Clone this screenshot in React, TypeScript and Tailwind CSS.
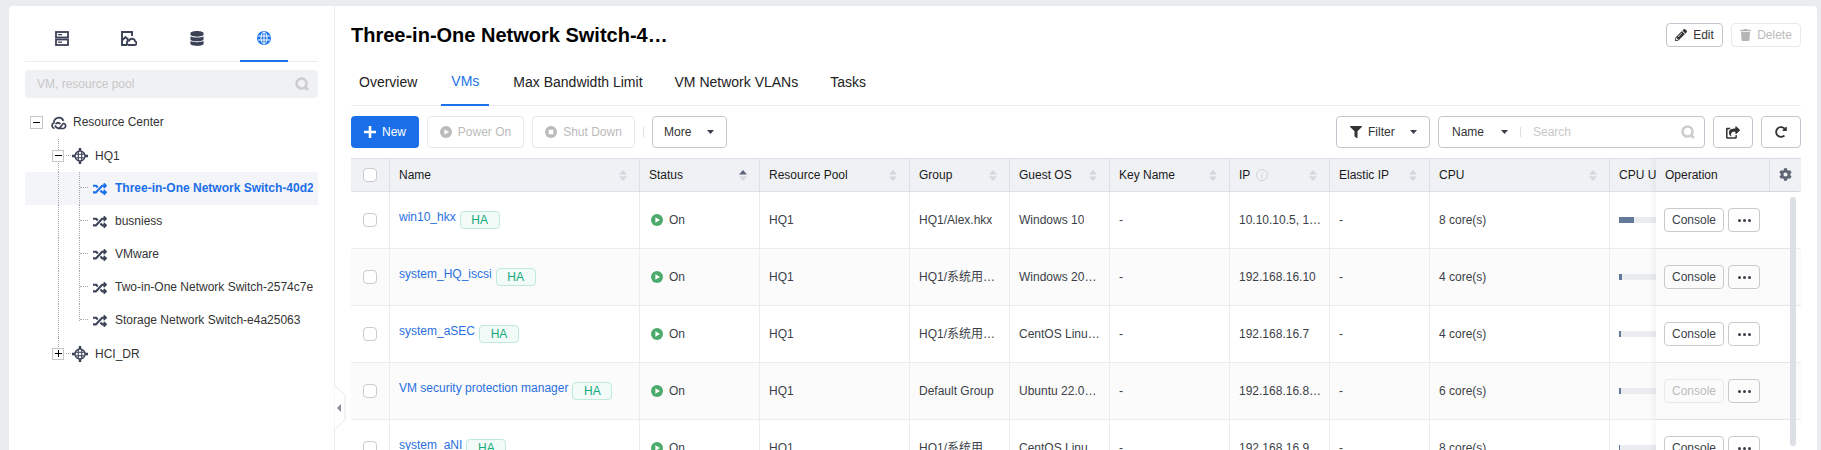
import { FaDatabase, FaCog, FaFilter, FaPencilAlt, FaRandom, FaRedoAlt, FaShareSquare, FaTrash } from 'react-icons/fa';

const dark = '#3b4256';

function SearchIcon({ className }: { className?: string }) {
  return (
    <svg viewBox="0 0 14 14" className={className} fill="none" stroke="#cdcdcd" strokeWidth="2.6">
      <circle cx="6.500" cy="6.500" r="5" />
      <path d="M10 10l3 3" />
    </svg>
  );
}

function Caret() {
  return (
    <svg viewBox="0 0 7 4" className="w-[7px] h-[4px]" fill="#3b3f4a">
      <path d="M0 0h7L3.5 4z" />
    </svg>
  );
}

function CircleGlyph({ stop, color }: { stop?: boolean; color: string }) {
  return (
    <svg viewBox="0 0 12 12" className="w-[12px] h-[12px] shrink-0">
      <circle cx="6" cy="6" r="6" fill={color} />
      {stop ? <rect x="3.700" y="3.700" width="4.600" height="4.600" fill="#fff" /> : <path d="M4.400 3.200v5.600L9 6z" fill="#fff" />}
    </svg>
  );
}

function ServerIcon() {
  return (
    <svg viewBox="0 0 14 15" className="w-[14px] h-[15px]" fill="none" stroke={dark} strokeWidth="1.800">
      <rect x="1" y="1" width="12" height="5.500" />
      <rect x="1" y="8.500" width="12" height="5.500" />
      <path d="M3 3.700h4M3 11.200h4" strokeWidth="1.300" />
    </svg>
  );
}

function ImageCloudIcon() {
  return (
    <svg viewBox="0 0 16 15" className="w-[16px] h-[15px]" fill="none" stroke={dark} strokeWidth="1.900">
      <path d="M6 14H1V1h10v4" />
      <path d="M1.500 9l3-3 3 3" />
      <path d="M7.500 14h6.300a1.900 1.900 0 0 0 .4-3.700 3.200 3.200 0 0 0-6-.8A2.300 2.300 0 0 0 7.500 14z" fill="#fff" />
    </svg>
  );
}

function GlobeIcon() {
  return (
    <svg viewBox="0 0 14 14" className="w-[14px] h-[14px]" fill="none">
      <circle cx="7" cy="7" r="7" fill="#1a73e8" />
      <ellipse cx="7" cy="7" rx="3" ry="6" stroke="#fff" strokeWidth="1" />
      <path d="M7 1v12M1 5h12M1 9h12" stroke="#fff" strokeWidth="1" />
    </svg>
  );
}

function CloudLoopIcon() {
  return (
    <svg viewBox="0 0 16 14" className="w-[16px] h-[14px]" fill="none" stroke={dark} strokeWidth="1.700">
      <path d="M3.500 12.500a3 3 0 0 1-.6-5.700A5 5 0 0 1 12.500 4.800" />
      <path d="M4 9.500c1.500 3 4 3.500 5.500 1.500S12 7 13 7.500a2.600 2.600 0 0 1-.5 5H7" />
      <path d="M4.500 8c2-2 3.500-1.500 5 0" />
    </svg>
  );
}

function NetworkIcon() {
  return (
    <svg viewBox="0 0 16 16" className="w-[16px] h-[16px]" fill="none" stroke={dark} strokeWidth="1.400">
      <circle cx="8" cy="8" r="5" />
      <path d="M3 6.300h10M3 9.700h10M6.300 3v10M9.700 3v10" strokeWidth="1.100" />
      <path d="M0 8h3M13 8h3M8 0v3M8 13v3" strokeWidth="2.400" />
    </svg>
  );
}

function TreeBox({ open, small }: { open?: boolean; small?: boolean }) {
  return (
    <span className={`relative z-10 flex items-center justify-center bg-white border border-[#c4c6cc] shrink-0 ${small ? 'w-[12px] h-[12px]' : 'w-[13px] h-[13px]'}`}>
      <span className="block w-[7px] h-px bg-black" />
      {!open && <span className="absolute block w-px h-[7px] bg-black" />}
    </span>
  );
}

const switches = ['Three-in-One Network Switch-40d2a1b87', 'busniess', 'VMware', 'Two-in-One Network Switch-2574c7e9', 'Storage Network Switch-e4a25063'];

function Tree() {
  return (
    <div className="mt-[8px] text-[12px] text-[#333]">
      <div className="flex items-center h-[33px] pl-[5px]">
        <TreeBox open />
        <span className="ml-[8px] mr-[6px]"><CloudLoopIcon /></span>
        <span className="mb-[2px]">Resource Center</span>
      </div>
      <div className="relative flex items-center h-[33px] pl-[27px]">
        <span className="absolute left-[33px] top-0 bottom-0 border-l border-dotted border-[#aaa]" />
        <TreeBox open small />
        <span className="w-[5px] ml-[2px] mr-[1px] border-b border-dotted border-[#aaa]" />
        <span className="mr-[7px]"><NetworkIcon /></span>
        <span>HQ1</span>
      </div>
      {switches.map((s, i) => {
        const last = i === switches.length - 1;
        return (
          <div key={s} className={`relative flex items-center h-[33px] pl-[54px] ${i === 0 ? 'bg-[#f4f5f9] text-[#1a6fe8] font-bold' : ''}`}>
            <span className="absolute left-[33px] top-0 bottom-0 border-l border-dotted border-[#aaa]" />
            <span className={`self-start w-[9px] border-l border-dotted border-[#aaa] ${last ? 'h-[17px]' : 'h-full'}`}>
              <span className="block h-[16px] border-b border-dotted border-[#aaa]" />
            </span>
            <FaRandom className="w-[16px] h-[14px] ml-[4px] mr-[7px] shrink-0" color={i === 0 ? '#1a6fe8' : dark} />
            <span className="mb-[2px] whitespace-nowrap overflow-hidden w-[198px]">{s}</span>
          </div>
        );
      })}
      <div className="relative flex items-center h-[33px] pl-[27px]">
        <span className="absolute left-[33px] top-0 h-[10px] border-l border-dotted border-[#aaa]" />
        <TreeBox small />
        <span className="w-[5px] ml-[2px] mr-[1px] border-b border-dotted border-[#aaa]" />
        <span className="mr-[7px]"><NetworkIcon /></span>
        <span>HCI_DR</span>
      </div>
    </div>
  );
}

function Sidebar() {
  return (
    <aside className="w-[326px] shrink-0 bg-white border-r border-[#ebecf0] rounded-tl-sm px-[16px]">
      <div className="mt-[18px] flex gap-[19.4px] pl-[13px] border-b border-[#ebecf0]">
        {[<ServerIcon />, <ImageCloudIcon />, <FaDatabase className="w-[14px] h-[15px]" color={dark} />, <GlobeIcon />].map((icon, i) => (
          <div key={i} className={`w-[48px] h-[38px] -mb-px pb-[9px] flex items-center justify-center ${i === 3 ? 'border-b-2 border-[#1a73e8]' : ''}`}>
            {icon}
          </div>
        ))}
      </div>
      <div className="mt-[8px] h-[28px] rounded-sm bg-[#f0f1f4] flex items-center justify-between pl-[12px] pr-[9px] text-[12px] text-[#c8c8c8]">
        <span>VM, resource pool</span>
        <SearchIcon className="w-[14px] h-[14px]" />
      </div>
      <Tree />
    </aside>
  );
}

function PageHead() {
  return (
    <div className="flex items-center justify-between h-[58px]">
      <h1 className="w-[320px] truncate text-[20px] font-bold text-black">Three-in-One Network Switch-40d2a1b87</h1>
      <div className="flex gap-[8px] text-[12px]">
        <button className="w-[57px] h-[24px] rounded-sm border border-[#c3c6ce] flex items-center justify-center gap-[6px] text-[#333]">
          <FaPencilAlt className="w-[12px] h-[12px]" color="#333" />
          Edit
        </button>
        <button className="w-[70px] h-[24px] rounded-sm border border-[#e8e9ec] flex items-center justify-center gap-[6px] text-[#bbb]">
          <FaTrash className="w-[11px] h-[12px]" color="#b5b5b5" />
          Delete
        </button>
      </div>
    </div>
  );
}

function Tabs() {
  const tabs = ['Overview', 'VMs', 'Max Bandwidth Limit', 'VM Network VLANs', 'Tasks'];
  return (
    <div className="flex gap-[16px] h-[42px] border-b border-[#ebecf0] text-[14px] text-[#222]">
      {tabs.map((t) => (
        <div key={t} className={`h-[42px] pb-[6px] flex items-center justify-center ${t === 'VMs' ? 'min-w-[48px] border-b-2 border-[#1a73e8] text-[#1a73e8]' : 'px-[8px]'}`}>
          {t}
        </div>
      ))}
    </div>
  );
}

function Toolbar() {
  return (
    <div className="mt-[10px] flex justify-between h-[32px] text-[12px]">
      <div className="flex items-center gap-[8px]">
        <button className="w-[68px] h-[32px] rounded-sm bg-[#1a6fe8] text-white flex items-center justify-center gap-[6px]">
          <svg viewBox="0 0 12 12" className="w-[12px] h-[12px]" fill="none" stroke="#fff" strokeWidth="2.600"><path d="M6 0v12M0 6h12" /></svg>
          New
        </button>
        <button className="w-[97px] h-[32px] rounded-sm border border-[#e8e9ec] text-[#bbb] flex items-center justify-center gap-[6px]">
          <CircleGlyph color="#bbb" />
          Power On
        </button>
        <button className="w-[103px] h-[32px] rounded-sm border border-[#e8e9ec] text-[#bbb] flex items-center justify-center gap-[6px]">
          <CircleGlyph stop color="#bbb" />
          Shut Down
        </button>
        <span className="w-px h-[10px] bg-[#dcdfe6]" />
        <button className="w-[75px] h-[32px] rounded-sm border border-[#c3c6ce] text-[#333] flex items-center justify-between pl-[11px] pr-[12px]">
          More
          <Caret />
        </button>
      </div>
      <div className="flex gap-[8px]">
        <button className="w-[94px] h-[32px] rounded-sm border border-[#c3c6ce] text-[#333] flex items-center pl-[13px] pr-[12px]">
          <FaFilter className="w-[12px] h-[12px] mr-[6px]" color="#333" />
          Filter
          <span className="ml-auto"><Caret /></span>
        </button>
        <div className="w-[267px] h-[32px] rounded-sm border border-[#c3c6ce] flex items-center pl-[13px] pr-[9px] text-[#333]">
          Name
          <span className="ml-[17px]"><Caret /></span>
          <span className="w-px h-[10px] ml-[12px] mr-[12px] bg-[#dcdfe6]" />
          <span className="text-[#c8c8c8]">Search</span>
          <SearchIcon className="ml-auto w-[14px] h-[14px]" />
        </div>
        <button className="w-[40px] h-[32px] rounded-sm border border-[#c3c6ce] flex items-center justify-center">
          <FaShareSquare className="w-[14px] h-[13px]" color="#333" />
        </button>
        <button className="w-[40px] h-[32px] rounded-sm border border-[#c3c6ce] flex items-center justify-center">
          <FaRedoAlt className="w-[12px] h-[12px]" color="#333" />
        </button>
      </div>
    </div>
  );
}

function SortArrows({ active }: { active?: boolean }) {
  return (
    <svg viewBox="0 0 8 11" className="w-[8px] h-[11px] shrink-0">
      <path d="M4 0l4 4.500H0z" fill={active ? '#5a6478' : '#d4d6dc'} />
      <path d="M0 6.500h8L4 11z" fill="#d4d6dc" />
    </svg>
  );
}

const columns = [
  { label: 'Name', w: 'w-[250px]' },
  { label: 'Status', w: 'w-[120px]' },
  { label: 'Resource Pool', w: 'w-[150px]' },
  { label: 'Group', w: 'w-[100px]' },
  { label: 'Guest OS', w: 'w-[100px]' },
  { label: 'Key Name', w: 'w-[120px]' },
  { label: 'IP', w: 'w-[100px]' },
  { label: 'Elastic IP', w: 'w-[100px]' },
  { label: 'CPU', w: 'w-[180px]' },
];

const rows = [
  { name: 'win10_hkx', group: 'HQ1/Alex.hkx', os: 'Windows 10', ip: '10.10.10.5, 10.10.10.6', cpu: '8 core(s)', used: 15 },
  { name: 'system_HQ_iscsi', group: 'HQ1/系统用户虚拟机', os: 'Windows 2012 R2', ip: '192.168.16.10', cpu: '4 core(s)', used: 3 },
  { name: 'system_aSEC', group: 'HQ1/系统用户虚拟机', os: 'CentOS Linux 7', ip: '192.168.16.7', cpu: '4 core(s)', used: 2 },
  { name: 'VM security protection manager', group: 'Default Group', os: 'Ubuntu 22.04 LTS', ip: '192.168.16.8, 10.0.0.1', cpu: '6 core(s)', used: 2, disabled: true },
  { name: 'system_aNI', group: 'HQ1/系统用户虚拟机', os: 'CentOS Linux 7', ip: '192.168.16.9', cpu: '8 core(s)', used: 1 },
];

function HeaderRow() {
  return (
    <div className="flex h-[34px] bg-[#f0f1f5] border-y border-[#dcdfe6] text-[12px] text-[#1a1a1a]">
      <div className="flex-1 min-w-0 overflow-hidden flex">
        <div className="w-[39px] shrink-0 flex items-center pl-[12px] border-r border-[#dcdfe6]">
          <span className="w-[14px] h-[14px] rounded-sm border border-[#c8cbd2] bg-white" />
        </div>
        {columns.map((c) => (
          <div key={c.label} className={`${c.w} shrink-0 flex items-center justify-between pl-[9px] pr-[12px] border-r border-[#dcdfe6]`}>
            <span className="flex items-center gap-[6px]">
              {c.label}
              {c.label === 'IP' && (
                <svg viewBox="0 0 12 12" className="w-[12px] h-[12px]" fill="none" stroke="#cfd1d6">
                  <circle cx="6" cy="6" r="5.500" />
                  <path d="M6 5v4M6 3v1" />
                </svg>
              )}
            </span>
            <SortArrows active={c.label === 'Status'} />
          </div>
        ))}
        <div className="w-[200px] shrink-0 flex items-center pl-[9px] whitespace-nowrap">CPU Usage</div>
      </div>
      <div className="relative w-[145px] shrink-0 flex bg-[#f0f1f5] shadow-[-4px_0_5px_rgba(0,0,0,0.04)]">
        <div className="flex-1 flex items-center pl-[9px] border-r border-[#dcdfe6]">Operation</div>
        <div className="w-[31px] flex items-center justify-center pb-[2px]">
          <FaCog className="w-[13px] h-[13px]" color="#5f6673" />
        </div>
      </div>
    </div>
  );
}

function Row({ row, even }: { row: (typeof rows)[number]; even: boolean }) {
  const bg = even ? 'bg-[#fbfbfb]' : 'bg-white';
  const cell = 'shrink-0 flex items-center border-r border-[#ebecf0] min-w-0';
  const pad = 'pl-[9px] pr-[8px]';
  return (
    <div className={`flex h-[57px] border-b border-[#ebecf0] text-[12px] text-[#3c3f48] ${bg}`}>
      <div className="flex-1 min-w-0 overflow-hidden flex">
        <div className="w-[39px] shrink-0 flex items-center pl-[12px] border-r border-[#ebecf0]">
          <span className="w-[14px] h-[14px] rounded-sm border border-[#c8cbd2] bg-white" />
        </div>
        <div className={`${cell} ${pad} w-[250px]`}>
          <span className="mb-[6px] text-[#2970e0] whitespace-nowrap">{row.name}</span>
          <span className="ml-[4px] w-[40px] h-[18px] flex items-center justify-center rounded-sm border border-[#bfe9da] bg-[#f2fbf8] text-[#12a97a]">HA</span>
        </div>
        <div className={`${cell} pl-[11px] w-[120px]`}>
          <CircleGlyph color="#4cab6c" />
          <span className="ml-[6px]">On</span>
        </div>
        <div className={`${cell} ${pad} w-[150px]`}>HQ1</div>
        <div className={`${cell} ${pad} w-[100px]`}><span className="truncate">{row.group}</span></div>
        <div className={`${cell} ${pad} w-[100px]`}><span className="truncate">{row.os}</span></div>
        <div className={`${cell} ${pad} w-[120px]`}>-</div>
        <div className={`${cell} pl-[9px] pr-[5px] w-[100px]`}><span className="truncate">{row.ip}</span></div>
        <div className={`${cell} ${pad} w-[100px]`}>-</div>
        <div className={`${cell} ${pad} w-[180px]`}>{row.cpu}</div>
        <div className="w-[200px] shrink-0 flex items-center pl-[9px]">
          <div className="w-[150px] h-[6px] bg-[#eaecf0]">
            <div className="h-full bg-[#64799a]" style={{ width: row.used }} />
          </div>
        </div>
      </div>
      <div className={`relative w-[145px] shrink-0 flex items-center gap-[4px] pl-[8px] shadow-[-4px_0_5px_rgba(0,0,0,0.04)] ${bg}`}>
        <button className={`w-[60px] h-[24px] rounded-sm border ${row.disabled ? 'border-[#e8e9ec] text-[#bbb]' : 'border-[#c8cad0] text-[#3c3f48]'}`}>Console</button>
        <button className="w-[32px] h-[24px] rounded-sm border border-[#c8cad0] flex items-center justify-center gap-[2px]">
          <span className="w-[3px] h-[3px] rounded-full bg-[#3c3f48]" />
          <span className="w-[3px] h-[3px] rounded-full bg-[#3c3f48]" />
          <span className="w-[3px] h-[3px] rounded-full bg-[#3c3f48]" />
        </button>
      </div>
    </div>
  );
}

function VmTable() {
  return (
    <div className="relative mt-[10px]">
      <HeaderRow />
      {rows.map((r, i) => <Row key={r.name} row={r} even={i % 2 === 1} />)}
      <div className="absolute right-[5px] top-[39px] w-[6px] h-[249px] rounded-full bg-[#dcdfe6] z-20" />
    </div>
  );
}

export default function App() {
  return (
    <div className="relative w-[1821px] h-[450px] overflow-hidden bg-[#ebecf0] pt-[6px] pl-[9px] pr-[4px] flex font-['Liberation_Sans','Noto_Sans_CJK_SC',sans-serif]">
      <Sidebar />
      <main className="flex-1 min-w-0 bg-white rounded-tr-sm px-[16px]">
        <PageHead />
        <Tabs />
        <Toolbar />
        <VmTable />
      </main>
      {/* collapse handle on the sidebar edge */}
      <svg viewBox="0 0 12 46" className="absolute left-[334px] top-[385px] w-[12px] h-[46px] z-10" fill="#fff" stroke="#e4e5ea">
        <path d="M0.500 0l10.500 10.500v24L0.500 45" />
        <path d="M7 19v8l-4-4z" fill="#8a8f99" stroke="none" />
      </svg>
    </div>
  );
}
